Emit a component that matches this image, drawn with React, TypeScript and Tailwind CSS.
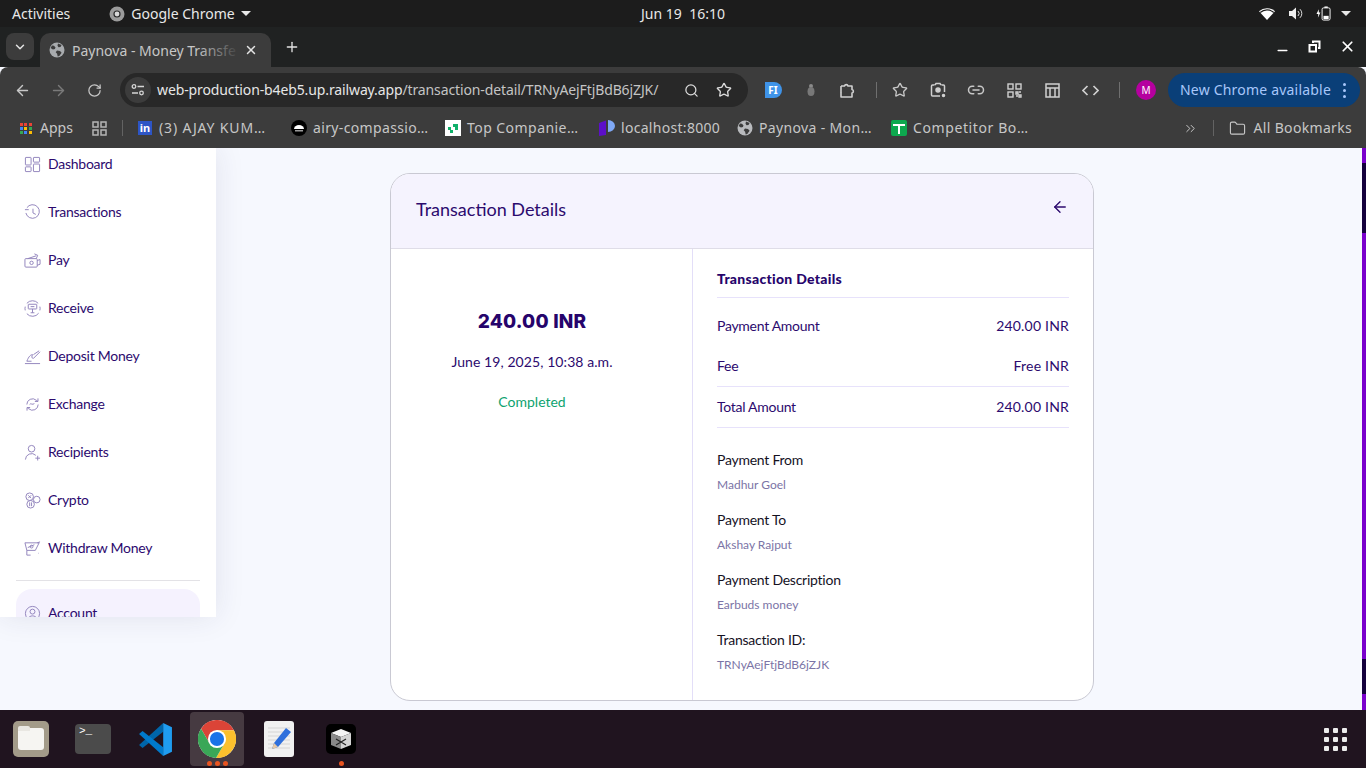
import {
  ArrowLeft,
  ArrowRight,
  ChevronDown,
  ChevronsRight,
  Folder,
  Link2,
  Minus,
  Plus,
  RotateCw,
  Search,
  Star,
  X,
} from "lucide-react";
import type { ReactNode } from "react";

const ui = "font-['Noto_Sans',sans-serif]";
const web = "font-['Lato',sans-serif]";

function ChromeLogo({ size = 38 }: { size?: number }) {
  const sector = "M43.6 14A22 22 0 0 0 5.54 12.03L15.34 29 24 14Z";
  return (
    <svg width={size} height={size} viewBox="2 2 44 44">
      <circle cx="24" cy="24" r="22" fill="#fff" />
      <path d={sector} fill="#db4437" />
      <path d={sector} fill="#fbc02d" transform="rotate(120 24 24)" />
      <path d={sector} fill="#3aa757" transform="rotate(240 24 24)" />
      <circle cx="24" cy="24" r="10.5" fill="#fff" />
      <circle cx="24" cy="24" r="8.2" fill="#1a73e8" />
    </svg>
  );
}

function GlobeFill({ className }: { className?: string }) {
  return (
    <svg width="16" height="16" viewBox="0 0 16 16" className={className}>
      <circle cx="8" cy="8" r="7.5" fill="currentColor" />
      <path d="M3 3.5l2 .2 1.5 1.8-.6 1.6-2 .3L1.6 6zM9 1.5l3.6 1.6-1.1 2-2 .2-1-1.6zM8 8.5l3 .6 1.6 1.6-2.3 3.2-1.6.5-.6-2.6-1.4-1.6z" fill="#3c3c3c" />
    </svg>
  );
}

function Bookmark({ icon, label, className }: { icon: ReactNode; label: string; className: string }) {
  return (
    <div className={`flex items-center gap-[6px] ${className}`}>
      <span className="flex w-4 h-4 items-center justify-center shrink-0">{icon}</span>
      <span className="text-[14px] text-[#c7c7c7] whitespace-nowrap pb-[2px]">{label}</span>
    </div>
  );
}

function ToolBtn({ children, w = "w-[38px]" }: { children: ReactNode; w?: string }) {
  return <div className={`${w} h-[34px] flex items-center justify-center text-[#c7c7c7] shrink-0`}>{children}</div>;
}

function TopBar() {
  return (
    <div className={`h-[27px] bg-[#1c1c1c] flex items-center text-[#e8e8e8] text-[14px] relative ${ui}`}>
      <span className="ml-3">Activities</span>
      <span className="ml-[39px] flex items-center gap-[6px]">
        <svg width="16" height="16" viewBox="0 0 16 16">
          <circle cx="8" cy="8" r="7.5" fill="#9b9b9b" />
          <circle cx="8" cy="8" r="3.6" fill="#2a2a2a" />
          <circle cx="8" cy="8" r="2.4" fill="#d8d8d8" />
        </svg>
        Google Chrome
        <span className="w-0 h-0 border-x-[5px] border-x-transparent border-t-[5px] border-t-[#e8e8e8]" />
      </span>
      <span className="absolute left-[641px] whitespace-pre tracking-[0.02px]">Jun 19  16:10</span>
      <div className="ml-auto mr-[15px] flex items-center gap-[14px]">
        <svg width="16" height="13" viewBox="0 0 16 13">
          <path d="M0 4.2A12 12 0 0 1 16 4.2L8 13Z" fill="#fff" />
          <path d="M1.2 5.5A10 10 0 0 1 14.8 5.5" stroke="#1c1c1c" strokeWidth="1.2" fill="none" />
        </svg>
        <svg width="15" height="13" viewBox="0 0 15 13">
          <path d="M0 4h3l4-3.5v12L3 9H0z" fill="#eee" />
          <path d="M9 4a3.5 3.5 0 0 1 0 5M11 2.2a6 6 0 0 1 0 8.6" stroke="#ddd" strokeWidth="1" fill="none" />
        </svg>
        <svg width="15" height="15" viewBox="0 0 16 15" className="-ml-[2px]">
          <path d="M3 3L.5 8H2.5L2 12l2.7-5.5H3z" fill="#fff" />
          <rect x="6.5" y="1.5" width="8.5" height="13" rx="1.5" stroke="#fff" fill="none" />
          <rect x="9" y="0" width="3.5" height="1.5" fill="#fff" />
          <rect x="8" y="10" width="5.5" height="3.5" fill="#fff" />
        </svg>
        <span className="w-0 h-0 border-x-[5px] border-x-transparent border-t-[5px] border-t-[#e8e8e8] -ml-[4px]" />
      </div>
    </div>
  );
}

function TabStrip() {
  return (
    <div className={`h-[40px] bg-[#202222] flex items-end pl-[6px] ${ui}`}>
      <div className="w-[28px] h-[27px] mb-[7px] rounded-lg bg-[#3c3c3c] flex items-center justify-center text-[#e3e3e3]">
        <ChevronDown size={14} strokeWidth={2.5} />
      </div>
      <div className="ml-[6px] w-[231px] h-[34px] rounded-t-[10px] bg-[#3c3c3c] flex items-center pl-[9px] relative">
        <GlobeFill className="text-[#a8abae]" />
        <span className="ml-[7px] text-[14px] text-[#c7c7c7] whitespace-nowrap w-[168px] overflow-hidden">Paynova - Money Transfe</span>
        <div className="absolute left-[156px] top-0 w-[44px] h-full bg-gradient-to-r from-transparent to-[#3c3c3c]" />
        <X size={14} strokeWidth={2.5} className="text-[#e3e3e3] ml-[4px] shrink-0 relative" />
      </div>
      <Plus size={16} strokeWidth={2} className="text-[#e3e3e3] ml-[13px] mb-[12px]" />
      <div className="ml-auto mr-[10px] mb-[12px] flex items-center gap-[17px] text-white">
        <Minus size={15} strokeWidth={2.2} className="translate-y-[4px]" />
        <svg width="15" height="15" viewBox="0 0 15 15" fill="none" stroke="#fff" strokeWidth="2">
          <rect x="2.5" y="6" width="6.5" height="6.5" />
          <path d="M6 4V2.5h6.5V9H11" />
        </svg>
        <X size={17} strokeWidth={2.4} />
      </div>
    </div>
  );
}

function Toolbar() {
  return (
    <div className={`h-[41px] bg-[#3c3c3c] rounded-t-lg flex items-center pl-1 ${ui}`}>
      <div className="flex mt-[5px]">
        <ToolBtn w="w-9"><ArrowLeft size={17} strokeWidth={2} /></ToolBtn>
        <ToolBtn w="w-9"><ArrowRight size={17} strokeWidth={2} className="text-[#7a7a7a]" /></ToolBtn>
        <ToolBtn w="w-9"><RotateCw size={15} strokeWidth={2} /></ToolBtn>
      </div>
      <div className="ml-2 w-[628px] h-[34px] mt-[5px] rounded-full bg-[#282828] flex items-center pl-[5px] shrink-0">
        <div className="w-[26px] h-[26px] rounded-full bg-[#3c3c3c] flex items-center justify-center">
          <svg width="14" height="12" viewBox="0 0 14 12" fill="none" stroke="#d5d5d5" strokeWidth="1.3">
            <circle cx="3" cy="2.5" r="1.8" />
            <path d="M6.5 2.5H13M1 9H7" />
            <circle cx="10.5" cy="9" r="1.8" />
          </svg>
        </div>
        <span className="ml-[6px] text-[14px] tracking-[-0.12px] whitespace-nowrap text-[#e6e6e6] pb-[2px]">
          web-production-b4eb5.up.railway.app<span className="text-[#c4c4c4]">/transaction-detail/TRNyAejFtjBdB6jZJK/</span>
        </span>
        <div className="ml-auto mr-4 flex items-center gap-[17px] text-[#dcdcdc]">
          <Search size={15} strokeWidth={2} />
          <Star size={16} strokeWidth={2} />
        </div>
      </div>
      <div className="ml-[6px] flex items-center mt-[5px]">
        <ToolBtn>
          <div className="w-[17px] h-[16px] bg-[#3f93e8] rounded-l-[2px] rounded-r-full text-white text-[10px] font-bold flex items-center justify-center">FI</div>
        </ToolBtn>
        <ToolBtn>
          <svg width="10" height="14" viewBox="0 0 10 14">
            <circle cx="5" cy="3" r="2" fill="#8a8a8a" />
            <ellipse cx="5" cy="8.5" rx="3.5" ry="4.5" fill="#787878" />
          </svg>
        </ToolBtn>
        <ToolBtn>
          <svg width="17" height="17" viewBox="0 0 17 17" fill="none" stroke="#d0d0d0" strokeWidth="1.6" strokeLinejoin="round" className="-ml-[3px]">
            <path d="M2 4h3.5a1.8 1.8 0 0 1 3.5 0H13v3.5a1.8 1.8 0 0 1 0 3.5v4H2v-4.2" />
            <path d="M2 11V4" />
          </svg>
        </ToolBtn>
        <div className="w-px h-[16px] bg-[#6f6f6f] ml-2 mr-[7px]" />
        <ToolBtn w="w-[38px] -ml-[3px]">
          <Star size={16} strokeWidth={2} />
        </ToolBtn>
        <ToolBtn>
          <svg width="16" height="16" viewBox="0 0 16 16" fill="none" stroke="#d0d0d0" strokeWidth="1.5">
            <path d="M4.5 3H2.5a1 1 0 0 0-1 1v9a1 1 0 0 0 1 1H10M11.5 3h2a1 1 0 0 1 1 1v6M5 3l1-1.5h4L11 3" />
            <circle cx="8" cy="8" r="2" fill="#d0d0d0" />
            <circle cx="13.5" cy="13.5" r="1" fill="#d0d0d0" />
          </svg>
        </ToolBtn>
        <ToolBtn><Link2 size={18} strokeWidth={2} /></ToolBtn>
        <ToolBtn>
          <svg width="15" height="15" viewBox="0 0 15 15" fill="none" stroke="#d0d0d0" strokeWidth="1.4">
            <rect x="1" y="1" width="5" height="5" />
            <rect x="9" y="1" width="5" height="5" />
            <rect x="1" y="9" width="5" height="5" />
            <path d="M9 9h2v2H9zM12 12h2v2h-2zM12 9h2M9 13h2" />
          </svg>
        </ToolBtn>
        <ToolBtn>
          <svg width="15" height="15" viewBox="0 0 15 15" fill="none" stroke="#d0d0d0" strokeWidth="1.5">
            <rect x="1" y="1" width="13" height="13" />
            <path d="M1 5h13M5 5v9M10 5v9" />
          </svg>
        </ToolBtn>
        <ToolBtn>
          <svg width="17" height="11" viewBox="0 0 17 11" fill="none" stroke="#d0d0d0" strokeWidth="1.7">
            <path d="M5.5 1L1 5.5 5.5 10M11.5 1L16 5.5 11.5 10" />
          </svg>
        </ToolBtn>
        <div className="w-px h-[16px] bg-[#6f6f6f] ml-[10px] mr-[16px]" />
        <div className="w-5 h-5 rounded-full bg-[#b5009f] text-white text-[10px] flex items-center justify-center shrink-0">M</div>
        <div className="ml-[12px] w-[192px] h-[34px] rounded-full bg-[#0a3f78] flex items-center pl-3 shrink-0">
          <span className="text-[14px] text-[#a8c7fa] tracking-[0.2px] whitespace-nowrap pb-[2px]">New Chrome available</span>
          <span className="ml-auto mr-[14px] flex flex-col gap-[3px]">
            <i className="w-[3px] h-[3px] rounded-full bg-[#a8c7fa]" />
            <i className="w-[3px] h-[3px] rounded-full bg-[#a8c7fa]" />
            <i className="w-[3px] h-[3px] rounded-full bg-[#a8c7fa]" />
          </span>
        </div>
      </div>
    </div>
  );
}

function Bookmarks() {
  const apps = ["#ea4335", "#ea4335", "#ea4335", "#4285f4", "#fbbc05", "#34a853", "#34a853", "#4285f4", "#fbbc05"];
  return (
    <div className={`h-[40px] bg-[#3c3c3c] flex items-center ${ui}`}>
      <Bookmark
        className="ml-[18px] w-[56px]"
        label="Apps"
        icon={
          <span className="grid grid-cols-3 gap-px w-[13px]">
            {apps.map((c, i) => (
              <i key={i} className="w-[3px] h-[3px]" style={{ background: c }} />
            ))}
          </span>
        }
      />
      <svg width="15" height="15" viewBox="0 0 15 15" fill="none" stroke="#b5b5b5" strokeWidth="1.5" className="ml-[18px]">
        <rect x="1" y="1" width="5" height="5" />
        <rect x="9" y="1" width="5" height="5" />
        <rect x="1" y="9" width="5" height="5" />
        <rect x="9" y="9" width="5" height="5" />
      </svg>
      <div className="w-px h-[16px] bg-[#636363] ml-[15px]" />
      <Bookmark
        className="ml-[14px] w-[130px] tracking-[0.85px]"
        label="(3) AJAY KUM…"
        icon={<span className="w-[14px] h-[14px] bg-[#2d55c5] text-white text-[11px] font-bold leading-[14px] text-center tracking-normal">in</span>}
      />
      <Bookmark
        className="ml-[24px] w-[137px] tracking-[0.35px]"
        label="airy-compassio…"
        icon={
          <svg width="16" height="16" viewBox="0 0 16 16">
            <circle cx="8" cy="8" r="8" fill="#000" />
            <path d="M3 9a5 4 0 0 1 10 0z" fill="#fff" />
            <rect x="4" y="10" width="8" height="1.5" fill="#999" />
          </svg>
        }
      />
      <Bookmark
        className="ml-[17px] w-[134px] tracking-[0.45px]"
        label="Top Companie…"
        icon={
          <span className="w-4 h-4 bg-white flex items-center justify-center">
            <svg width="10" height="10" viewBox="0 0 10 10" fill="#0fb06a">
              <path d="M0 4h3v3h2v3H2V7H0zM5 1h5v6H7V4H5z" />
            </svg>
          </span>
        }
      />
      <Bookmark
        className="ml-[20px] w-[121px] tracking-[0.3px]"
        label="localhost:8000"
        icon={
          <svg width="16" height="16" viewBox="0 0 16 16">
            <path d="M0 3l7-2.5V15l-7 1z" fill="#5c0fc9" />
            <path d="M9 0a7 6 0 0 1 0 12z" fill="#7fa8f5" />
          </svg>
        }
      />
      <Bookmark className="ml-[17px] w-[135px] tracking-[0.35px]" label="Paynova - Mon…" icon={<GlobeFill className="text-[#b8babd]" />} />
      <Bookmark
        className="ml-[19px] tracking-[0.6px]"
        label="Competitor Bo…"
        icon={
          <span className="w-4 h-4 rounded-[2px] bg-[#0da84e] relative flex items-center justify-center">
            <i className="absolute top-[4px] left-[2px] right-[2px] h-[2px] bg-white" />
            <i className="absolute top-[4px] bottom-[2px] w-[2px] bg-white" />
          </span>
        }
      />
      <div className="ml-auto flex items-center text-[#c7c7c7] mr-[14px]">
        <ChevronsRight size={15} strokeWidth={1.6} />
        <div className="w-px h-[16px] bg-[#636363] ml-[15px] mr-[19px]" />
        <Folder size={17} strokeWidth={1.6} className="mr-2 -ml-[4px]" />
        <span className="text-[14px] whitespace-nowrap tracking-[0.32px] pb-[2px]">All Bookmarks</span>
      </div>
    </div>
  );
}

const navIcons: Record<string, ReactNode> = {
  Dashboard: (
    <>
      <rect x="1.5" y="1.5" width="6" height="8" rx=".6" />
      <rect x="10" y="1.5" width="6.5" height="5" rx=".6" />
      <rect x="1.5" y="11.5" width="6" height="5" rx=".6" />
      <rect x="10" y="8.5" width="6.5" height="8" rx=".6" />
    </>
  ),
  Transactions: (
    <>
      <path d="M3 4A7.2 7.2 0 1 1 2 9.5" />
      <path d="M1 6h4M9.5 5v4.5l3 1.5" />
    </>
  ),
  Pay: (
    <>
      <rect x="1" y="7" width="13" height="9" rx="1" />
      <circle cx="8" cy="11.5" r="1.8" />
      <path d="M4 7l9-3M11 2l3.5 1.5L13 7M14 9l3-1v5l-3 1" />
    </>
  ),
  Receive: (
    <>
      <path d="M3 3.5A8 8 0 0 1 15 3.5M15.5 14A8 8 0 0 1 3 14.5M1.3 11A8 8 0 0 1 1.3 7M16.8 7a8 8 0 0 1 0 4" />
      <rect x="4.5" y="4.5" width="9" height="5" rx=".6" />
      <path d="M9 9.5v4M7 13.5h4M7 7h4" />
    </>
  ),
  "Deposit Money": (
    <>
      <path d="M1 16.5h16M3 14c2-5 4-7 6-7-1 2-1 4 1 4l7-7M10 7l6-4" />
      <path d="M3 14h5" />
    </>
  ),
  Exchange: (
    <>
      <path d="M3 9a6 6 0 0 1 10-4.5l1.5 1M14.8 2.5v3.3h-3.3" />
      <path d="M15 9a6 6 0 0 1-10 4.5L3.5 12.5M3.2 15.5v-3.3h3.3" />
      <path d="M6 9c1-2 3 1 5-1" />
    </>
  ),
  Recipients: (
    <>
      <circle cx="8" cy="5" r="3.5" />
      <path d="M1.5 16.5a6.5 6.5 0 0 1 11-4.5M12 15h5M14.5 12.5v5" />
    </>
  ),
  Crypto: (
    <>
      <circle cx="6" cy="5" r="4" />
      <circle cx="13.5" cy="8" r="3.5" />
      <circle cx="7" cy="13" r="4" />
      <path d="M4.5 3.5l3 3M7.5 3.5l-3 3M6 11v4M8 11v4" />
    </>
  ),
  "Withdraw Money": (
    <>
      <path d="M1 3h15l-4 8H3z" />
      <path d="M3 16V11M3 16h4M4 8l7-3M14 3l3-1M15 14h.5" />
      <circle cx="8" cy="7" r="1.5" />
    </>
  ),
  Account: (
    <>
      <circle cx="9" cy="9" r="7.5" />
      <circle cx="9" cy="7" r="2.6" />
      <path d="M4.5 14.5c1-4 8-4 9 0" />
    </>
  ),
};

function NavItem({ label }: { label: string }) {
  return (
    <div className="h-12 flex items-center gap-[7px] pl-6 shrink-0">
      <svg width="17" height="17" viewBox="0 0 18 18" fill="none" stroke="#8f82bb" strokeWidth="1" className="shrink-0">
        {navIcons[label]}
      </svg>
      <span className="text-[14px] text-[#2c0a6e] tracking-[-0.25px] pb-[2px]">{label}</span>
    </div>
  );
}

function Sidebar() {
  const items = ["Dashboard", "Transactions", "Pay", "Receive", "Deposit Money", "Exchange", "Recipients", "Crypto", "Withdraw Money"];
  return (
    <aside className="w-[216px] h-[469px] bg-white overflow-hidden shrink-0 shadow-[0_0_28px_rgba(40,40,90,0.1)] z-10 flex flex-col">
      <div className="-mt-2">
        {items.map((i) => (
          <NavItem key={i} label={i} />
        ))}
      </div>
      <div className="h-px bg-[#e3e2e6] mx-4 mt-2 shrink-0" />
      <div className="mx-4 mt-2 bg-[#f5f2fe] rounded-2xl shrink-0 [&>div]:pl-2">
        <NavItem label="Account" />
      </div>
    </aside>
  );
}

function SummaryRow({ label, value }: { label: string; value: string }) {
  return (
    <div className="h-10 flex items-center justify-between text-[14px] text-[#2c0a6e] pb-[2px]">
      <span className="tracking-[-0.28px]">{label}</span>
      <span className="tracking-[0.2px]">{value}</span>
    </div>
  );
}

function InfoBlock({ label, value }: { label: string; value: string }) {
  return (
    <div className="mb-3">
      <p className="text-[14px] leading-6 text-[#15121f] tracking-[-0.25px]">{label}</p>
      <p className="text-[12px] h-6 leading-[26px] text-[#7b74a6]">{value}</p>
    </div>
  );
}

function Card() {
  return (
    <div className={`w-[704px] rounded-[20px] border border-[#c9c9d3] bg-white overflow-hidden ${web}`}>
      <div className="h-[75px] bg-[#f5f3fe] border-b border-[#dfdde8] flex items-center justify-between pl-[25px] pr-6">
        <h2 className="text-[18px] text-[#2c0a6e] pb-1">Transaction Details</h2>
        <ArrowLeft size={18} strokeWidth={1.8} className="text-[#2c0a6e] -mt-2" />
      </div>
      <div className="flex">
        <div className="w-[301px] pr-[19px] pt-[59px] text-center">
          <p className="font-['Inter',sans-serif] text-[19px] leading-7 font-extrabold tracking-[0.2px] text-[#26046b]">240.00 INR</p>
          <p className="mt-[14px] text-[14px] leading-6 text-[#2c0a6e] tracking-[0.08px]">June 19, 2025, 10:38 a.m.</p>
          <p className="mt-4 text-[14px] leading-6 text-[#0ea36f]">Completed</p>
        </div>
        <div className="flex-1 border-l border-[#e3def8] pl-6 pr-6 pt-5 pb-6">
          <h3 className="text-[14px] leading-5 font-black tracking-[0.28px] text-[#26046b] pb-2 border-b border-[#e7e2fb]">Transaction Details</h3>
          <div className="mt-2">
            <SummaryRow label="Payment Amount" value="240.00 INR" />
            <SummaryRow label="Fee" value="Free INR" />
          </div>
          <div className="border-y border-[#e7e2fb]">
            <SummaryRow label="Total Amount" value="240.00 INR" />
          </div>
          <div className="pt-5 -mb-3">
            <InfoBlock label="Payment From" value="Madhur Goel" />
            <InfoBlock label="Payment To" value="Akshay Rajput" />
            <InfoBlock label="Payment Description" value="Earbuds money" />
            <InfoBlock label="Transaction ID:" value="TRNyAejFtjBdB6jZJK" />
          </div>
        </div>
      </div>
    </div>
  );
}

function EdgeStrip() {
  return (
    <div className="w-1 shrink-0 flex flex-col bg-[#7a00cc]">
      <div className="h-[15px]" />
      <div className="h-[70px] bg-[#14003c]" />
      <div className="h-[426px]" />
      <div className="h-[35px] bg-[#14003c]" />
    </div>
  );
}

function DockCell({ children, active, dots = 0 }: { children: ReactNode; active?: boolean; dots?: number }) {
  return (
    <div className="w-[62px] h-[58px] flex items-center justify-center relative">
      {active && <div className="absolute left-1 right-1 top-[2px] bottom-[2px] rounded-[4px] bg-[#463a41]" />}
      <div className="relative">{children}</div>
      <div className="absolute bottom-[2px] flex gap-[3px]">
        {Array.from({ length: dots }).map((_, i) => (
          <i key={i} className="w-[5px] h-[5px] rounded-full bg-[#e95420]" />
        ))}
      </div>
    </div>
  );
}

function Dock() {
  return (
    <div className="h-[58px] bg-[#20141f] flex items-center">
      <DockCell>
        <div className="w-9 h-9 rounded-[5px] bg-[#a39b89] flex items-center justify-center">
          <div className="w-[26px] h-[22px] rounded-[3px] bg-[#f6f5f2] relative">
            <i className="absolute -top-[2px] left-0 w-[12px] h-[5px] rounded-t-[2px] bg-[#e9e7e2]" />
          </div>
        </div>
      </DockCell>
      <DockCell>
        <div className="w-9 h-[30px] rounded-[4px] bg-[#4b4b4b] pl-1 text-white text-[11px] leading-[14px] font-['Liberation_Mono',monospace]">&gt;_</div>
      </DockCell>
      <DockCell>
        <svg width="35" height="35" viewBox="0 0 100 100">
          <path d="M72 3V28L13 74 3 66Z" fill="#0065a9" />
          <path d="M3 34l10-8 59 46v25Z" fill="#007acc" />
          <path d="M72 3l25 12v70L72 97Z" fill="#1f9cf0" />
        </svg>
      </DockCell>
      <DockCell active dots={3}>
        <ChromeLogo />
      </DockCell>
      <DockCell>
        <svg width="30" height="36" viewBox="0 0 30 36">
          <rect width="30" height="36" rx="3" fill="#f1f1f1" />
          <path d="M4 7h22M4 11h22M4 15h22M4 19h22M4 23h22M4 27h22" stroke="#d5d5d5" />
          <path d="M22 7l5 4-13 15-6 2 2-6z" fill="#2e6fdc" />
          <path d="M10 22l4 4-6 2z" fill="#e8c9a4" />
        </svg>
      </DockCell>
      <DockCell dots={1}>
        <svg width="30" height="30" viewBox="0 0 30 30">
          <rect width="30" height="30" rx="5" fill="#000" />
          <path d="M15 5l10 4-10 4-10-4z" fill="#f4f4f4" />
          <path d="M5 9l10 4v12L5 21z" fill="#8a8a8a" />
          <path d="M25 9L15 13v12l10-4z" fill="#d4d4d4" />
          <path d="M10 15l10 6M20 15L10 21" stroke="#222" strokeWidth="1.2" />
        </svg>
      </DockCell>
      <div className="ml-auto mr-[19px] grid grid-cols-3 gap-[4px]">
        {Array.from({ length: 9 }).map((_, i) => (
          <i key={i} className="w-[5px] h-[5px] rounded-[1px] bg-[#ececec]" />
        ))}
      </div>
    </div>
  );
}

export default function App() {
  return (
    <div className="w-[1366px] h-[768px] flex flex-col overflow-hidden bg-[#f6f8fe]">
      <TopBar />
      <TabStrip />
      <Toolbar />
      <Bookmarks />
      <main className={`flex-1 flex overflow-hidden ${web}`}>
        <Sidebar />
        <div className="flex-1 pl-[174px] pt-[25px]">
          <Card />
        </div>
        <EdgeStrip />
      </main>
      <Dock />
    </div>
  );
}
